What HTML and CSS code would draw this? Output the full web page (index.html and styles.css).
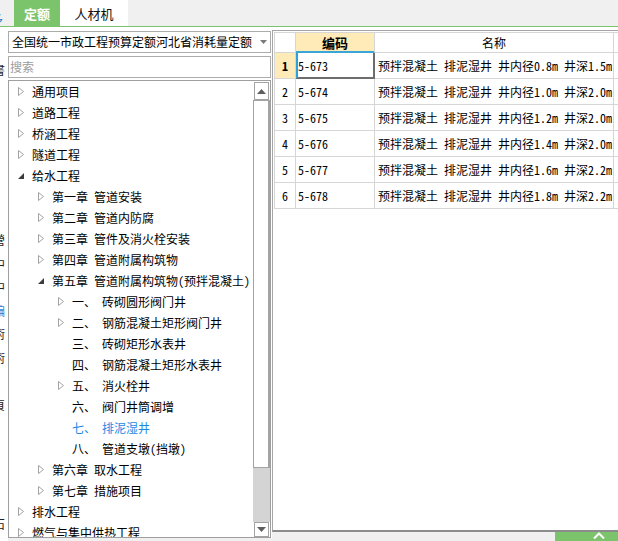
FILE: index.html
```html
<!DOCTYPE html>
<html lang="zh-CN">
<head>
<meta charset="utf-8">
<title>定额</title>
<link rel="stylesheet" href="styles.css">
</head>
<body>
<div class="topbar">
  <div class="edge-frag"><span class="frag-blue">多</span></div>
  <div class="tab active">定额</div>
  <div class="tab">人材机</div>
</div>
<div class="main">
  <div class="edge">
    <div class="ec-gap-a"></div>
    <div class="ec">書</div>
    <div class="ec-gap-b"></div>
    <div class="ec">營</div>
    <div class="ec">中</div>
    <div class="ec">中</div>
    <div class="ec blue">编</div>
    <div class="ec">術</div>
    <div class="ec">術</div>
    <div class="ec-gap-c"></div>
    <div class="ec">頁</div>
    <div class="ec-gap-d"></div>
    <div class="ec">石</div>
  </div>
  <div class="left">
    <div class="select">
      <span class="select-text">全国统一市政工程预算定额河北省消耗量定额</span>
      <svg class="select-arrow" width="7" height="4" viewBox="0 0 7 4"><polygon points="0,0 7,0 3.5,4" fill="#7a7a7a"/></svg>
    </div>
    <div class="search">搜索</div>
    <div class="tree">
      <div class="tree-list">
        <div class="node l0"><svg class="tw" width="6" height="9" viewBox="0 0 6 9"><polygon points="0.5,0.5 5.5,4.5 0.5,8.5" fill="#fff" stroke="#a3a3a3"/></svg><span>通用项目</span></div>
        <div class="node l0"><svg class="tw" width="6" height="9" viewBox="0 0 6 9"><polygon points="0.5,0.5 5.5,4.5 0.5,8.5" fill="#fff" stroke="#a3a3a3"/></svg><span>道路工程</span></div>
        <div class="node l0"><svg class="tw" width="6" height="9" viewBox="0 0 6 9"><polygon points="0.5,0.5 5.5,4.5 0.5,8.5" fill="#fff" stroke="#a3a3a3"/></svg><span>桥涵工程</span></div>
        <div class="node l0"><svg class="tw" width="6" height="9" viewBox="0 0 6 9"><polygon points="0.5,0.5 5.5,4.5 0.5,8.5" fill="#fff" stroke="#a3a3a3"/></svg><span>隧道工程</span></div>
        <div class="node l0"><svg class="tw" width="6" height="9" viewBox="0 0 6 9"><polygon points="6,2 6,8 0,8" fill="#3c3c3c"/></svg><span>给水工程</span></div>
        <div class="node l1"><svg class="tw" width="6" height="9" viewBox="0 0 6 9"><polygon points="0.5,0.5 5.5,4.5 0.5,8.5" fill="#fff" stroke="#a3a3a3"/></svg><span>第一章</span><span class="gap">管道安装</span></div>
        <div class="node l1"><svg class="tw" width="6" height="9" viewBox="0 0 6 9"><polygon points="0.5,0.5 5.5,4.5 0.5,8.5" fill="#fff" stroke="#a3a3a3"/></svg><span>第二章</span><span class="gap">管道内防腐</span></div>
        <div class="node l1"><svg class="tw" width="6" height="9" viewBox="0 0 6 9"><polygon points="0.5,0.5 5.5,4.5 0.5,8.5" fill="#fff" stroke="#a3a3a3"/></svg><span>第三章</span><span class="gap">管件及消火栓安装</span></div>
        <div class="node l1"><svg class="tw" width="6" height="9" viewBox="0 0 6 9"><polygon points="0.5,0.5 5.5,4.5 0.5,8.5" fill="#fff" stroke="#a3a3a3"/></svg><span>第四章</span><span class="gap">管道附属构筑物</span></div>
        <div class="node l1"><svg class="tw" width="6" height="9" viewBox="0 0 6 9"><polygon points="6,2 6,8 0,8" fill="#3c3c3c"/></svg><span>第五章</span><span class="gap">管道附属构筑物(预拌混凝土)</span></div>
        <div class="node l2"><svg class="tw" width="6" height="9" viewBox="0 0 6 9"><polygon points="0.5,0.5 5.5,4.5 0.5,8.5" fill="#fff" stroke="#a3a3a3"/></svg><span>一、</span><span class="gap">砖砌圆形阀门井</span></div>
        <div class="node l2"><svg class="tw" width="6" height="9" viewBox="0 0 6 9"><polygon points="0.5,0.5 5.5,4.5 0.5,8.5" fill="#fff" stroke="#a3a3a3"/></svg><span>二、</span><span class="gap">钢筋混凝土矩形阀门井</span></div>
        <div class="node l2"><span class="tw-empty"></span><span>三、</span><span class="gap">砖砌矩形水表井</span></div>
        <div class="node l2"><span class="tw-empty"></span><span>四、</span><span class="gap">钢筋混凝土矩形水表井</span></div>
        <div class="node l2"><svg class="tw" width="6" height="9" viewBox="0 0 6 9"><polygon points="0.5,0.5 5.5,4.5 0.5,8.5" fill="#fff" stroke="#a3a3a3"/></svg><span>五、</span><span class="gap">消火栓井</span></div>
        <div class="node l2"><span class="tw-empty"></span><span>六、</span><span class="gap">阀门井筒调增</span></div>
        <div class="node l2 selected"><span class="tw-empty"></span><span>七、</span><span class="gap">排泥湿井</span></div>
        <div class="node l2"><span class="tw-empty"></span><span>八、</span><span class="gap">管道支墩(挡墩)</span></div>
        <div class="node l1"><svg class="tw" width="6" height="9" viewBox="0 0 6 9"><polygon points="0.5,0.5 5.5,4.5 0.5,8.5" fill="#fff" stroke="#a3a3a3"/></svg><span>第六章</span><span class="gap">取水工程</span></div>
        <div class="node l1"><svg class="tw" width="6" height="9" viewBox="0 0 6 9"><polygon points="0.5,0.5 5.5,4.5 0.5,8.5" fill="#fff" stroke="#a3a3a3"/></svg><span>第七章</span><span class="gap">措施项目</span></div>
        <div class="node l0"><svg class="tw" width="6" height="9" viewBox="0 0 6 9"><polygon points="0.5,0.5 5.5,4.5 0.5,8.5" fill="#fff" stroke="#a3a3a3"/></svg><span>排水工程</span></div>
        <div class="node l0"><svg class="tw" width="6" height="9" viewBox="0 0 6 9"><polygon points="0.5,0.5 5.5,4.5 0.5,8.5" fill="#fff" stroke="#a3a3a3"/></svg><span>燃气与集中供热工程</span></div>
      </div>
      <div class="vscroll">
        <div class="sb-btn up"><svg width="9" height="5" viewBox="0 0 9 5"><polygon points="0,5 9,5 4.5,0" fill="#5e5e5e"/></svg></div>
        <div class="sb-thumb"></div>
        <div class="sb-track"></div>
        <div class="sb-btn down"><svg width="9" height="5" viewBox="0 0 9 5"><polygon points="0,0 9,0 4.5,5" fill="#5e5e5e"/></svg></div>
      </div>
    </div>
    <div class="left-foot"></div>
  </div>
  <div class="right">
    <div class="grid">
      <table class="tbl">
        <thead>
          <tr>
            <th class="c-no"></th>
            <th class="c-code hl">编码</th>
            <th class="c-name">名称</th>
            <th class="c-more"></th>
          </tr>
        </thead>
        <tbody>
          <tr>
            <td class="c-no cur">1</td>
            <td class="c-code sel">5-673</td>
            <td class="c-name">预拌混凝土 排泥湿井 井内径0.8m 井深1.5m</td>
            <td class="c-more"></td>
          </tr>
          <tr>
            <td class="c-no">2</td>
            <td class="c-code">5-674</td>
            <td class="c-name">预拌混凝土 排泥湿井 井内径1.0m 井深2.0m</td>
            <td class="c-more"></td>
          </tr>
          <tr>
            <td class="c-no">3</td>
            <td class="c-code">5-675</td>
            <td class="c-name">预拌混凝土 排泥湿井 井内径1.2m 井深2.0m</td>
            <td class="c-more"></td>
          </tr>
          <tr>
            <td class="c-no">4</td>
            <td class="c-code">5-676</td>
            <td class="c-name">预拌混凝土 排泥湿井 井内径1.4m 井深2.0m</td>
            <td class="c-more"></td>
          </tr>
          <tr>
            <td class="c-no">5</td>
            <td class="c-code">5-677</td>
            <td class="c-name">预拌混凝土 排泥湿井 井内径1.6m 井深2.2m</td>
            <td class="c-more"></td>
          </tr>
          <tr>
            <td class="c-no">6</td>
            <td class="c-code">5-678</td>
            <td class="c-name">预拌混凝土 排泥湿井 井内径1.8m 井深2.2m</td>
            <td class="c-more"></td>
          </tr>
        </tbody>
      </table>
    </div>
    <div class="status">
      <div class="status-green"><svg width="12" height="7" viewBox="0 0 12 7"><polyline points="1,6.5 6,1.5 11,6.5" fill="none" stroke="#ffffff" stroke-width="2"/></svg></div>
    </div>
  </div>
</div>
</body>
</html>
```

FILE: styles.css
```css
* { box-sizing: border-box; }

html, body {
  margin: 0;
  padding: 0;
}

body {
  width: 618px;
  height: 541px;
  overflow: hidden;
  background: #ffffff;
  color: #000000;
  font-family: "Noto Sans Mono CJK SC", "Noto Sans CJK SC", sans-serif;
  font-size: 12px;
  line-height: 1;
}

/* ---------- top tab bar ---------- */
.topbar {
  display: flex;
  height: 27px;
  background: #f0f0f0;
  border-bottom: 1px solid #7cc46b;
}

.edge-frag {
  width: 14px;
  overflow: hidden;
  display: flex;
  align-items: flex-end;
  padding-bottom: 1px;
}

.frag-blue {
  margin-left: -9px;
  color: #2b73c9;
  font-size: 12px;
}

.tab {
  display: flex;
  align-items: center;
  justify-content: center;
  font-size: 13px;
  height: 26px;
  background: #ffffff;
  width: 68px;
  color: #111;
}

.tab.active {
  width: 46px;
  background: #7cc46b;
  color: #ffffff;
  font-weight: bold;
}

/* ---------- main area ---------- */
.main {
  display: flex;
  height: 514px;
}

.edge {
  width: 8px;
  flex-shrink: 0;
  overflow: hidden;
  display: flex;
  flex-direction: column;
}

.ec {
  height: 23.5px;
  line-height: 23.5px;
  margin-left: -7px;
  color: #222;
  white-space: nowrap;
}

.ec.blue { color: #2b7fd8; }

.ec-gap-a { height: 31px; flex-shrink: 0; }
.ec-gap-b { height: 146.5px; flex-shrink: 0; }
.ec-gap-c { height: 23.5px; flex-shrink: 0; }
.ec-gap-d { height: 95.5px; flex-shrink: 0; }

/* ---------- left panel ---------- */
.left {
  width: 264px;
  flex-shrink: 0;
  display: flex;
  flex-direction: column;
  padding-top: 4px;
}

.select {
  width: 263px;
  height: 22px;
  border: 1px solid #acacac;
  display: flex;
  align-items: center;
  padding-left: 3px;
  background: #ffffff;
  white-space: nowrap;
  overflow: hidden;
}

.select-text { font-size: 12px; }

.select-arrow {
  margin-left: auto;
  margin-right: 3px;
  flex-shrink: 0;
}

.search {
  margin-top: 3px;
  width: 263px;
  height: 22px;
  border: 1px solid #acacac;
  color: #9c9c9c;
  padding-left: 1px;
  display: flex;
  align-items: center;
}

.tree {
  margin-top: 2px;
  width: 263px;
  height: 458px;
  border: 1px solid #9f9f9f;
  display: flex;
  background: #ffffff;
}

.tree-list {
  flex: 1;
  overflow: hidden;
}

.node {
  height: 21px;
  display: flex;
  align-items: center;
  white-space: nowrap;
}

.node.l0 { padding-left: 9px; }
.node.l1 { padding-left: 29px; }
.node.l2 { padding-left: 49px; }

.tw {
  flex-shrink: 0;
  margin-right: 8px;
}

.tw-empty {
  width: 6px;
  margin-right: 8px;
  flex-shrink: 0;
}

.gap { margin-left: 6px; }

.node.selected { color: #1a8ae6; }

.vscroll {
  width: 17px;
  flex-shrink: 0;
  display: flex;
  flex-direction: column;
}

.sb-btn {
  display: flex;
  align-items: center;
  justify-content: center;
  background: #ffffff;
  border: 1px solid #a3a3a3;
  margin-left: 1px;
  margin-right: 1px;
}

.sb-btn.up {
  height: 18px;
  margin-top: 1px;
}

.sb-btn.down {
  height: 15px;
}

.sb-thumb {
  height: 368px;
  border: 1px solid #a3a3a3;
  border-right-width: 2px;
  background: #ffffff;
}

.sb-track {
  flex: 1;
  background: #d4d4d4;
}

.left-foot {
  flex: 1;
  background: #f0f0f0;
}

/* ---------- right panel ---------- */
.right {
  flex: 1;
  min-width: 0;
  display: flex;
  flex-direction: column;
  padding-top: 3px;
}

.grid {
  height: 502px;
  border-top: 1px solid #a6a6a6;
  border-left: 1px solid #a6a6a6;
  border-bottom: 2px solid #8c8c8c;
  padding: 1px 0 0 1px;
  overflow: hidden;
  background: #ffffff;
}

.tbl {
  border-collapse: separate;
  border-spacing: 0;
  table-layout: fixed;
  width: 400px;
  border-top: 1px solid #d6d6d6;
  border-left: 1px solid #d6d6d6;
}

.tbl th,
.tbl td {
  border-right: 1px solid #d6d6d6;
  border-bottom: 1px solid #d6d6d6;
  padding: 0;
  white-space: pre;
  overflow: hidden;
  vertical-align: middle;
}

.tbl th {
  height: 20px;
  font-weight: normal;
  font-size: 12px;
  text-align: center;
}

.tbl td {
  height: 26px;
}

.c-no { width: 21px; text-align: center; }
.c-code { width: 79px; padding-left: 2px !important; }
.c-name { width: 239px; padding-left: 3px !important; }
.c-more { width: 61px; }

.tbl th.c-code,
.tbl th.c-name { padding-left: 0 !important; }

.tbl th.hl {
  background: #feebb8;
  font-weight: bold;
  font-size: 13px;
  border-bottom-color: #3aa6d8;
  box-shadow: inset 0 -1px 0 #3aa6d8;
}

.tbl td.cur {
  background: #feebb8;
  font-weight: bold;
}

.tbl td.sel {
  border-right-color: #6d6d6d;
  border-bottom-color: #6d6d6d;
  box-shadow: inset 2px 0 0 #2fa0d8, inset -1px -1px 0 #6d6d6d;
}

.status {
  height: 9px;
  background: #f0f0f0;
  display: flex;
  justify-content: flex-end;
}

.status-green {
  width: 63px;
  background: #7cc46b;
  display: flex;
  align-items: flex-start;
  justify-content: flex-end;
  padding-right: 13px;
}
```
